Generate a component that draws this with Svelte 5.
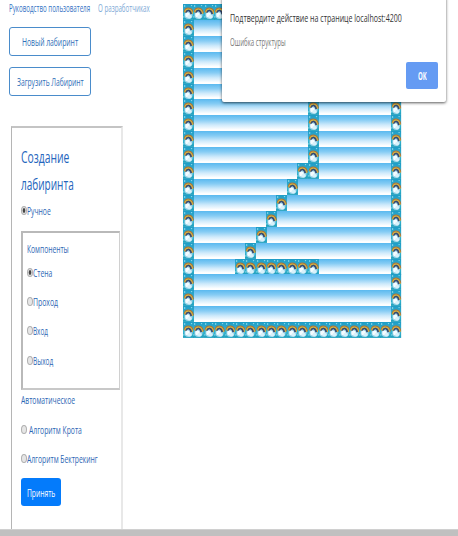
<script>
  const SIZE = 21;
  const inner = new Set(['10-11', '10-12', '11-10', '12-9', '13-8', '14-7', '15-6']);
  for (let r = 0; r < 10; r++) inner.add(`${r}-12`);
  for (let c = 5; c <= 12; c++) inner.add(`16-${c}`);

  const rows = Array.from({ length: SIZE }, (_, r) =>
    Array.from({ length: SIZE }, (_, c) =>
      r === 0 || c === 0 || r === SIZE - 1 || c === SIZE - 1 || inner.has(`${r}-${c}`)
    )
  );

  const components = ['Стена', 'Проход', 'Вход', 'Выход'];
  const widths = [19, 25, 15, 20];

  // Condenses a label horizontally to the given width
  function fit(node, width) {
    node.style.transform = `scaleX(${width / node.offsetWidth})`;
  }
</script>

{#snippet label(text, width)}
  <span class="fit" style="width: {width}px"><span class="glyphs" use:fit={width}>{text}</span></span>
{/snippet}

<svg class="defs" width="0" height="0" aria-hidden="true">
  <defs>
    <linearGradient id="sky" x1="0" y1="0" x2="0" y2="1">
      <stop offset="0" stop-color="#1f9cc6" />
      <stop offset="0.6" stop-color="#36b3cf" />
      <stop offset="1" stop-color="#1f9fbd" />
    </linearGradient>
    <symbol id="wall" viewBox="0 0 10 16" preserveAspectRatio="none">
      <rect width="10" height="16" fill="url(#sky)" />
      <circle cx="1.5" cy="2" r="0.7" fill="#a5e6f2" />
      <circle cx="7.8" cy="1.6" r="0.7" fill="#8edced" />
      <circle cx="0.8" cy="13" r="0.7" fill="#9be4ef" />
      <ellipse cx="5" cy="11" rx="3.7" ry="4" fill="#9fd6ea" />
      <path d="M1.2 8C1.8 2.8 8.4 2.6 9.4 9.4" fill="none" stroke="#a9713b" stroke-width="1.2" />
      <path d="M1.7 8.6C2.6 3.8 7.6 3.8 8.7 10" fill="none" stroke="#dcb13a" stroke-width="1.4" />
      <path d="M2.6 8.8C3.6 5.4 6.8 5.8 7.5 10.2" fill="none" stroke="#39486f" stroke-width="1.5" />
      <ellipse cx="4.1" cy="11" rx="2.1" ry="2.5" fill="#f5fcff" />
      <ellipse cx="6" cy="12.6" rx="1.9" ry="1.9" fill="#d8f1fa" />
    </symbol>
  </defs>
</svg>

<div class="page">
  <main>
    <aside>
      <nav>
        <a class="guide">{@render label('Руководство пользователя', 81)}</a>
        <a class="authors">{@render label('О разработчиках', 52)}</a>
      </nav>
      <button class="outline">{@render label('Новый лабиринт', 56)}</button>
      <button class="outline">{@render label('Загрузить Лабиринт', 67)}</button>

      <section class="panel">
        <h3>
          {@render label('Создание', 48)}
          {@render label('лабиринта', 53)}
        </h3>
        <div class="option manual"><i class="radio on"></i>{@render label('Ручное', 24)}</div>
        <div class="group">
          <div class="title">{@render label('Компоненты', 42)}</div>
          {#each components as name, i}
            <div class="option"><i class="radio" class:on={i === 0}></i>{@render label(name, widths[i])}</div>
          {/each}
        </div>
        <div class="auto">{@render label('Автоматическое', 54)}</div>
        <div class="option algo"><i class="radio"></i><b></b>{@render label('Алгоритм Крота', 53)}</div>
        <div class="option algo"><i class="radio"></i>{@render label('Алгоритм Бектрекинг', 71)}</div>
        <button class="accept">{@render label('Принять', 28)}</button>
      </section>
    </aside>

    <div class="maze">
      {#each rows as row}
        <div class="row">
          {#each row as wall}
            <div class="cell">
              {#if wall}<svg preserveAspectRatio="none"><use href="#wall" width="100%" height="100%" /></svg>{/if}
            </div>
          {/each}
        </div>
      {/each}
    </div>
  </main>
  <footer></footer>

  <div class="dialog">
    <div class="caption">{@render label('Подтвердите действие на странице localhost:4200', 172)}</div>
    <div class="message">{@render label('Ошибка структуры', 56)}</div>
    <button class="ok">{@render label('ОК', 9)}</button>
  </div>
</div>

<style>
  .defs { position: absolute; }
  .page {
    position: relative;
    display: flex;
    flex-direction: column;
    width: 458px;
    height: 536px;
    overflow: hidden;
    background: #fff;
    color: #2c66b4;
    font: 11px/16px "Open Sans", "Noto Sans", sans-serif;
  }
  main { display: flex; flex: 1; min-height: 0; overflow: hidden; }
  footer { height: 7px; flex: none; box-sizing: border-box; background: #c0c0c0; border-top: 1px solid #d0d0d0; }
  .fit { display: inline-block; white-space: nowrap; flex: none; }
  .glyphs { display: inline-block; transform-origin: 0 50%; }

  aside { display: flex; flex-direction: column; width: 183px; flex: none; }
  nav { display: flex; flex: none; gap: 8px; padding-left: 9px; height: 27px; font-size: 10px; }
  .guide { color: #3473c4; }
  .authors { color: #7da9d6; }
  button {
    display: flex;
    flex: none;
    align-items: center;
    justify-content: center;
    box-sizing: border-box;
    padding: 0;
    border: 0;
    font: inherit;
  }
  .outline {
    width: 82px;
    height: 29px;
    margin: 0 0 11px 9px;
    padding-top: 1px;
    background: #fff;
    border: 1px solid #4a8ccb;
    border-radius: 3px;
    color: #2f6fb8;
  }
  .panel {
    flex: none;
    box-sizing: border-box;
    width: 112px;
    height: 420px;
    margin: 19px 0 0 11px;
    padding: 16px 0 0 9px;
    border: solid;
    border-width: 2px 2px 0 1px;
    border-color: #c4c4c4 #e8e8e8 #c4c4c4 #b5b5b5;
  }
  h3 {
    display: flex;
    flex-direction: column;
    margin: 0;
    font-size: 17px;
    font-weight: 400;
    line-height: 26.5px;
    color: #2565bd;
  }
  .option { display: flex; align-items: center; height: 29.3px; }
  .radio {
    box-sizing: border-box;
    width: 6px;
    height: 9px;
    margin: 0 0 1px;
    border: 1px solid #b0b0b0;
    border-radius: 50%;
    background: #e6e6e6;
    flex: none;
  }
  .radio.on { background: radial-gradient(ellipse, #444 0 35%, #e0e0e0 60%); }
  .manual { height: 34px; box-sizing: border-box; padding-bottom: 7px; }
  .group {
    box-sizing: border-box;
    width: 99px;
    height: 159px;
    border: solid;
    border-width: 2px 1px 2px 2px;
    border-color: #b9b9b9 #d0d0d0 #c8c8c8 #b9b9b9;
    padding: 8px 0 0 4px;
  }
  .title { height: 17px; }
  .auto { height: 23px; padding-top: 2px; }
  .algo { height: 29px; }
  .algo b { width: 2px; }
  .accept {
    width: 40px;
    height: 28px;
    margin-top: 5px;
    padding-top: 2px;
    border-radius: 3px;
    background: #047bfb;
    color: #fff;
  }

  .maze { display: flex; flex-direction: column; width: 218px; height: 334px; margin-top: 4px; }
  .row {
    display: flex;
    flex: 1;
    min-height: 0;
    background: linear-gradient(#5ab9ef 0%, #86ccf4 30%, #cfeafb 62%, #fff 92%);
  }
  .cell { flex: 1; min-width: 0; }
  .cell svg { display: block; width: calc(100% + 0.6px); height: 100%; overflow: visible; }
  .cell:last-child svg { width: 100%; }

  .dialog {
    position: absolute;
    top: -4px;
    left: 222px;
    box-sizing: border-box;
    width: 224px;
    height: 106px;
    padding: 14px 8px 0;
    background: #fff;
    border-radius: 2px;
    box-shadow: 0 1px 3px rgba(0, 0, 0, 0.65);
  }
  .caption { height: 24px; color: #333; font-size: 11.5px; }
  .message { height: 28px; color: #777; font-size: 10px; }
  .ok {
    width: 32px;
    height: 27px;
    margin-left: auto;
    border-radius: 2px;
    background: #659bf3;
    color: #fff;
    font-size: 10px;
    font-weight: 700;
  }
</style>
